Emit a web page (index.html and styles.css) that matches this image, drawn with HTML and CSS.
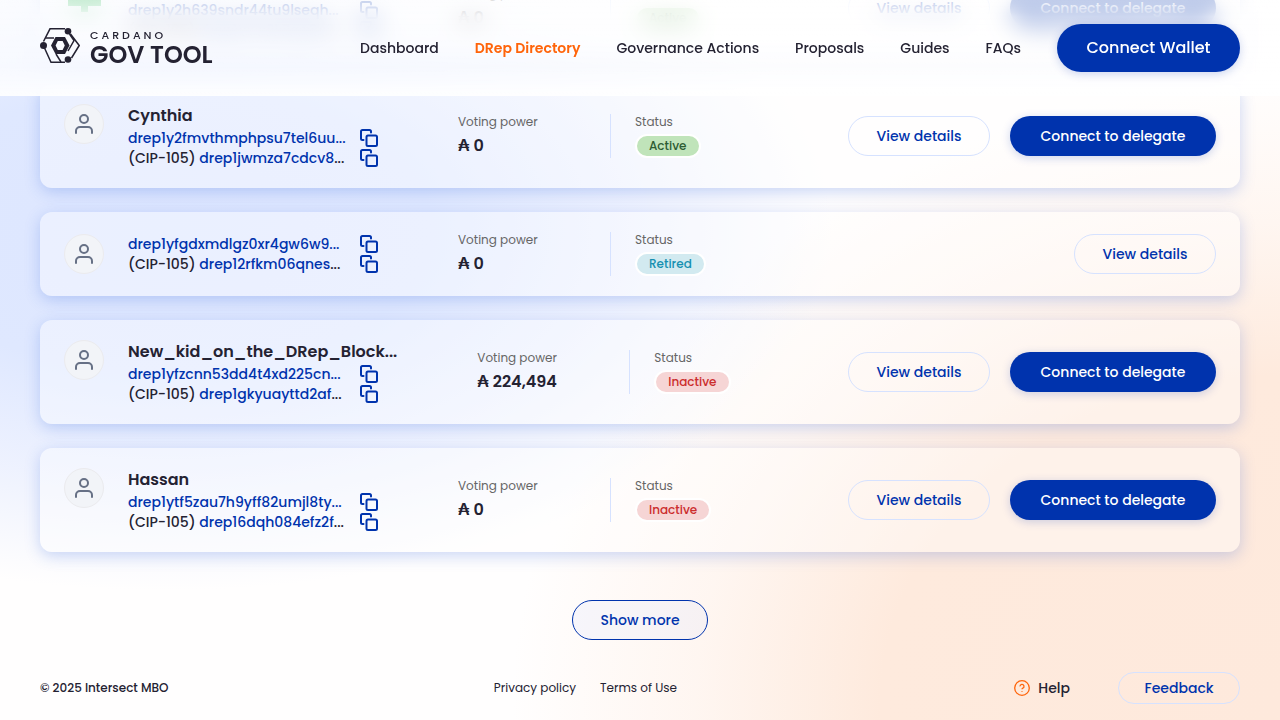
FILE: index.html
```html
<!DOCTYPE html>
<html lang="en">
<head>
<meta charset="utf-8">
<title>DRep Directory - GovTool</title>
<link rel="stylesheet" href="styles.css">
</head>
<body>
<svg class="defs" aria-hidden="true">
  <symbol id="user" viewBox="0 0 24 24"><path d="M20 21v-2a4 4 0 0 0-4-4H8a4 4 0 0 0-4 4v2"/><circle cx="12" cy="7" r="4"/></symbol>
  <symbol id="copy" viewBox="0 0 18 18"><rect x="6.500" y="6.500" width="10.500" height="10.500" rx="1.500"/><path d="M3.500 11H2.500A1.500 1.500 0 0 1 1 9.500V2.500A1.500 1.500 0 0 1 2.500 1H9.500a1.500 1.500 0 0 1 1.500 1.500v1"/></symbol>
</svg>
<header class="header">
  <a class="logo" href="#" aria-label="Cardano Gov Tool">
    <svg class="logo-mark" viewBox="0 0 40 35" aria-hidden="true">
      <g fill="none" stroke="currentColor" stroke-width="1.500">
        <path d="M3.500 13.500 10 .8H25"/><path d="M30.500 6 39.200 17.500 31.500 30"/><path d="M4.500 20 11 34.200H25"/>
        <path d="M5.500 10H14"/><path d="M29.500 6 34 12.500 28 23"/><path d="M16 26l5 8"/>
      </g>
      <circle cx="28" cy="3.300" r="3.300" fill="currentColor"/><circle cx="3.500" cy="17.500" r="3.500" fill="currentColor"/><circle cx="28" cy="31.500" r="3.300" fill="currentColor"/>
      <path fill="currentColor" fill-rule="evenodd" d="M15.500 9h9.500l4.500 8.500-4.500 8.500h-9.500l-4.500-8.500zM17.800 13l-2.200 4.500 2.200 4.500h4.800l2.200-4.500-2.200-4.500z"/>
    </svg>
    <span class="logo-words"><span class="logo-top">CARDANO</span><span class="logo-name">GOV TOOL</span></span>
  </a>
  <nav class="nav">
    <a href="#">Dashboard</a>
    <a href="#" class="current">DRep Directory</a>
    <a href="#">Governance Actions</a>
    <a href="#">Proposals</a>
    <a href="#">Guides</a>
    <a href="#">FAQs</a>
    <button class="btn primary large">Connect Wallet</button>
  </nav>
</header>
<main class="main">
  <ul class="list">
    <li class="card">
      <div class="who"><span class="avatar picture"><svg viewBox="0 0 40 40" aria-hidden="true"><path fill="#19b24b" d="M4 0h33v30H24v6h-7v-6H4z"/></svg></span>
        <div class="ids"><h2 class="name">DRep</h2>
          <div class="id"><a href="#">drep1y2h639sndr44tu9lseqh...</a><button class="copy" aria-label="Copy ID"><svg><use href="#copy"/></svg></button></div>
          <div class="id"><span>(CIP-105) <a href="#">drep1tmn3k7qa2v9</a>...</span><button class="copy" aria-label="Copy CIP-105 ID"><svg><use href="#copy"/></svg></button></div>
        </div></div>
      <div class="power"><span class="label">Voting power</span><strong>₳ 0</strong></div>
      <div class="state"><span class="label">Status</span><span class="pill active">Active</span></div>
      <div class="actions"><button class="btn outline">View details</button><button class="btn primary">Connect to delegate</button></div>
    </li>
    <li class="card">
      <div class="who"><span class="avatar"><svg><use href="#user"/></svg></span>
        <div class="ids"><h2 class="name">Cynthia</h2>
          <div class="id"><a href="#">drep1y2fmvthmphpsu7tel6uu...</a><button class="copy" aria-label="Copy ID"><svg><use href="#copy"/></svg></button></div>
          <div class="id"><span>(CIP-105) <a href="#">drep1jwmza7cdcv8</a>...</span><button class="copy" aria-label="Copy CIP-105 ID"><svg><use href="#copy"/></svg></button></div>
        </div></div>
      <div class="power"><span class="label">Voting power</span><strong>₳ 0</strong></div>
      <div class="state"><span class="label">Status</span><span class="pill active">Active</span></div>
      <div class="actions"><button class="btn outline">View details</button><button class="btn primary">Connect to delegate</button></div>
    </li>
    <li class="card">
      <div class="who"><span class="avatar"><svg><use href="#user"/></svg></span>
        <div class="ids">
          <div class="id"><a href="#">drep1yfgdxmdlgz0xr4gw6w9...</a><button class="copy" aria-label="Copy ID"><svg><use href="#copy"/></svg></button></div>
          <div class="id"><span>(CIP-105) <a href="#">drep12rfkm06qnes</a>...</span><button class="copy" aria-label="Copy CIP-105 ID"><svg><use href="#copy"/></svg></button></div>
        </div></div>
      <div class="power"><span class="label">Voting power</span><strong>₳ 0</strong></div>
      <div class="state"><span class="label">Status</span><span class="pill retired">Retired</span></div>
      <div class="actions"><button class="btn outline">View details</button></div>
    </li>
    <li class="card">
      <div class="who"><span class="avatar"><svg><use href="#user"/></svg></span>
        <div class="ids"><h2 class="name">New_kid_on_the_DRep_Block...</h2>
          <div class="id"><a href="#">drep1yfzcnn53dd4t4xd225cn...</a><button class="copy" aria-label="Copy ID"><svg><use href="#copy"/></svg></button></div>
          <div class="id"><span>(CIP-105) <a href="#">drep1gkyuayttd2af</a>...</span><button class="copy" aria-label="Copy CIP-105 ID"><svg><use href="#copy"/></svg></button></div>
        </div></div>
      <div class="power"><span class="label">Voting power</span><strong>₳ 224,494</strong></div>
      <div class="state"><span class="label">Status</span><span class="pill inactive">Inactive</span></div>
      <div class="actions"><button class="btn outline">View details</button><button class="btn primary">Connect to delegate</button></div>
    </li>
    <li class="card">
      <div class="who"><span class="avatar"><svg><use href="#user"/></svg></span>
        <div class="ids"><h2 class="name">Hassan</h2>
          <div class="id"><a href="#">drep1ytf5zau7h9yff82umjl8ty...</a><button class="copy" aria-label="Copy ID"><svg><use href="#copy"/></svg></button></div>
          <div class="id"><span>(CIP-105) <a href="#">drep16dqh084efz2f</a>...</span><button class="copy" aria-label="Copy CIP-105 ID"><svg><use href="#copy"/></svg></button></div>
        </div></div>
      <div class="power"><span class="label">Voting power</span><strong>₳ 0</strong></div>
      <div class="state"><span class="label">Status</span><span class="pill inactive">Inactive</span></div>
      <div class="actions"><button class="btn outline">View details</button><button class="btn primary">Connect to delegate</button></div>
    </li>
  </ul>
  <button class="btn more">Show more</button>
</main>
<footer class="footer">
  <span class="copyright">© 2025 Intersect MBO</span>
  <nav class="legal"><a href="#">Privacy policy</a><a href="#">Terms of Use</a></nav>
  <div class="support">
    <a class="help" href="#"><svg viewBox="0 0 16 16" aria-hidden="true"><circle cx="8" cy="8" r="7.300"/><path d="M6 6.400a2 2 0 1 1 2.900 1.700c-.6.3-.9.600-.9 1.200M8 11.200v.7"/></svg>Help</a>
    <button class="btn outline small">Feedback</button>
  </div>
</footer>
</body>
</html>
```
FILE: styles.css
```css
* { box-sizing: border-box; }
body {
  margin: 0;
  height: 100vh;
  overflow: hidden;
  display: flex;
  flex-direction: column;
  justify-content: flex-end;
  font-family: Poppins, Inter, sans-serif;
  font-size: 14px;
  font-weight: 500;
  line-height: 20px;
  color: #242232;
  background:
    radial-gradient(ellipse 52% 50% at 13% 32%, #dde6ff 0%, #dfe8ff 40%, rgba(224, 232, 255, .55) 70%, rgba(224, 232, 255, 0) 100%),
    radial-gradient(ellipse 60% 88% at 100% 98%, #fee9dc 0%, #feeadd 52%, rgba(254, 234, 221, .4) 76%, rgba(254, 234, 221, 0) 100%),
    #fffefe;
}
.defs { display: none; }
a { color: inherit; text-decoration: none; }
button { font: inherit; cursor: pointer; }

.header {
  position: fixed;
  inset: 0 0 auto;
  z-index: 2;
  height: 96px;
  padding: 0 40px;
  display: flex;
  align-items: center;
  justify-content: space-between;
}
.header::before, .header::after { content: ""; position: absolute; inset: 0; z-index: -1; }
.header::before {
  backdrop-filter: blur(12px);
  -webkit-mask-image: linear-gradient(rgba(0, 0, 0, .4), #000 16px);
  mask-image: linear-gradient(rgba(0, 0, 0, .4), #000 16px);
}
.header::after { background: linear-gradient(rgba(255, 255, 255, .75), rgba(255, 255, 255, .7) 70%, rgba(255, 255, 255, .9)); }
.logo { display: flex; gap: 10px; }
.logo-mark { width: 40px; height: 35px; }
.logo-words { display: flex; flex-direction: column; }
.logo-top { font-size: 11px; line-height: 14px; letter-spacing: 3px; }
.logo-name { font-size: 24px; line-height: 26px; font-weight: 600; }
.nav { display: flex; align-items: center; gap: 36px; }
.nav .current { color: #ff640a; font-weight: 600; }

.btn {
  height: 40px;
  padding: 0 24px;
  border: 1px solid transparent;
  border-radius: 100px;
  background: transparent;
  color: #0033ad;
  font-size: 14px;
  font-weight: 500;
  white-space: nowrap;
}
.primary { min-width: 206px; background: #0033ad; color: #fff; box-shadow: 0 2px 10px rgba(0, 51, 173, .2); }
.outline { min-width: 142px; border-color: #d6e2ff; }
.large { min-width: 183px; height: 48px; font-size: 16px; }
.small { min-width: 122px; height: 32px; }
.more { min-width: 136px; border-color: #0033ad; background: rgba(214, 226, 255, .2); }

.main { display: flex; flex-direction: column; align-items: center; gap: 48px; padding: 0 40px; }
.list { width: 100%; margin: 0; padding: 0; list-style: none; display: flex; flex-direction: column; gap: 24px; }
.card {
  display: flex;
  align-items: center;
  padding: 20px 24px;
  border-radius: 12px;
  background: rgba(255, 255, 255, .4);
  box-shadow: 0 4px 15px rgba(47, 98, 220, .25);
}
.who { display: flex; gap: 24px; margin-right: 80px; }
.avatar {
  width: 40px;
  height: 40px;
  display: grid;
  place-items: center;
  border: 1px solid #ebebee;
  border-radius: 50%;
  background: #f2f4f8;
}
.avatar svg { width: 24px; height: 24px; fill: none; stroke: #667085; stroke-width: 2; stroke-linecap: round; }
.picture { border: 0; background: none; }
.picture svg { width: 40px; height: 40px; stroke: none; }
.ids { min-width: 250px; }
.name { margin: 0; font-size: 16px; line-height: 24px; font-weight: 600; }
.id { display: flex; align-items: center; justify-content: space-between; width: 250px; height: 20px; white-space: nowrap; }
.id a { color: #0033ad; }
.copy { display: flex; padding: 0; border: 0; background: none; }
.copy svg { width: 18px; height: 18px; fill: none; stroke: #0033ad; stroke-width: 2; stroke-linecap: round; }
.power { display: flex; flex-direction: column; gap: 4px; width: 153px; height: 44px; border-right: 1px solid #d6e2ff; }
.power strong { font-size: 16px; line-height: 24px; font-weight: 600; }
.label { font-size: 12px; line-height: 16px; font-weight: 400; color: #666; }
.state { display: flex; flex-direction: column; align-items: flex-start; gap: 4px; padding-left: 24px; }
.pill { padding: 0 12px; border: 2px solid #fff; border-radius: 100px; font-size: 12px; line-height: 20px; }
.active { background: #c0e4ba; color: #2d5c33; }
.retired { background: #d2eaf0; color: #1690b0; }
.inactive { background: #f6d5d5; color: #cc2d2d; }
.actions { display: flex; gap: 20px; margin-left: auto; }

.footer { display: flex; align-items: center; justify-content: space-between; padding: 32px 40px 16px; font-size: 12px; }
.legal { display: flex; gap: 24px; font-weight: 400; }
.support { display: flex; align-items: center; gap: 48px; padding-left: 12px; }
.help { display: flex; align-items: center; gap: 8px; font-size: 14px; }
.help svg { width: 16px; height: 16px; fill: none; stroke: #ff640a; stroke-width: 1.300; }
```
